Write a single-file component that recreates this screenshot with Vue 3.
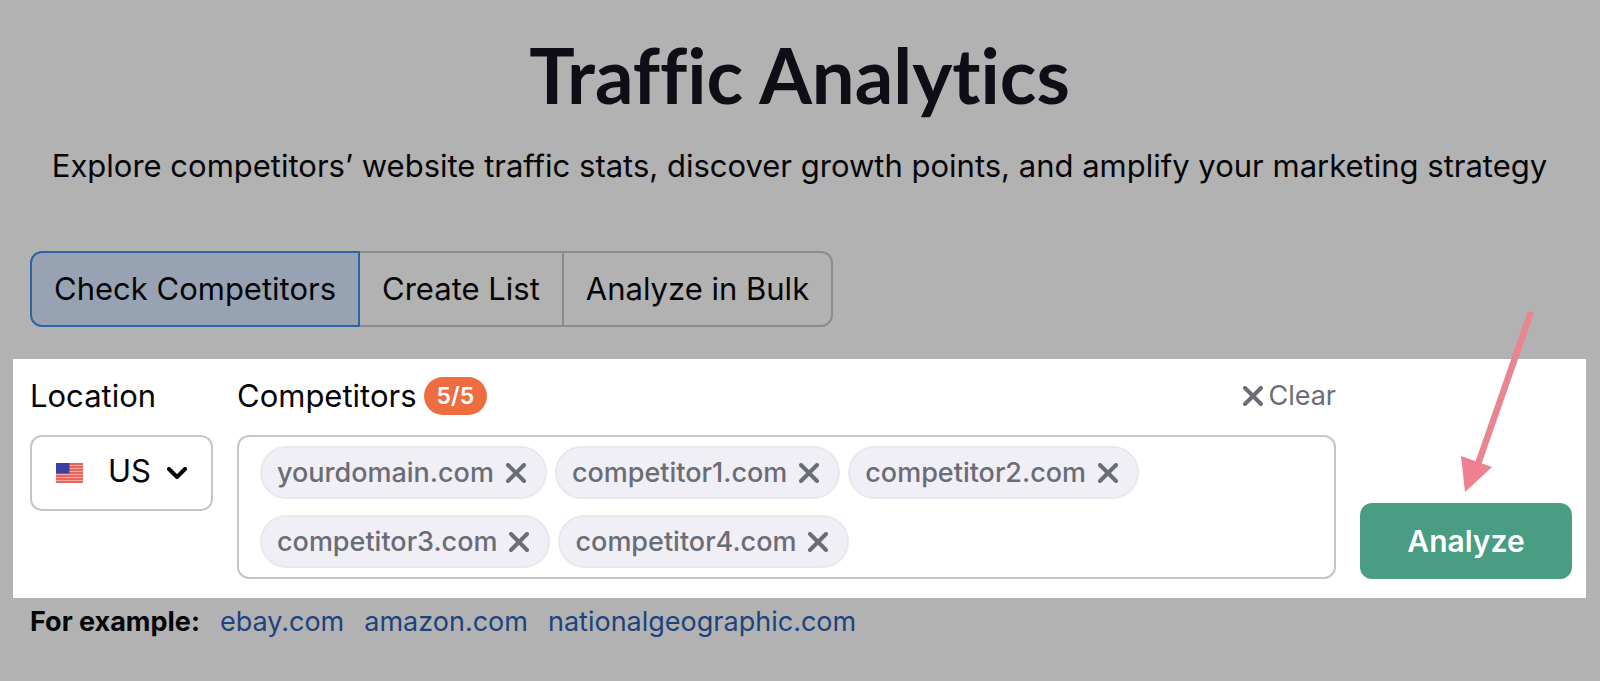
<script setup>
import { ref } from 'vue'

const tabs = ['Check Competitors', 'Create List', 'Analyze in Bulk']
const activeTab = ref(tabs[0])
const location = ref('US')
const limit = 5
const count = ref(5)
const competitors = ref([
  'yourdomain.com',
  'competitor1.com',
  'competitor2.com',
  'competitor3.com',
  'competitor4.com',
])
const examples = ['ebay.com', 'amazon.com', 'nationalgeographic.com']

function remove(name) {
  competitors.value = competitors.value.filter((c) => c !== name)
  count.value = competitors.value.length
}

function clearAll() {
  competitors.value = []
  count.value = 0
}
</script>

<template>
  <main class="page">
    <header class="intro">
      <h1 class="title">Traffic Analytics</h1>
      <p class="subtitle">Explore competitors’ website traffic stats, discover growth points, and amplify your marketing strategy</p>
    </header>

    <nav class="tabs">
      <button
        v-for="tab in tabs"
        :key="tab"
        type="button"
        class="tab"
        :class="{ active: tab === activeTab }"
        @click="activeTab = tab"
      >{{ tab }}</button>
    </nav>

    <form class="panel" @submit.prevent>
      <div class="field">
        <div class="label-row">
          <label for="location">Location</label>
        </div>
        <div class="select-wrap">
          <svg class="flag" viewBox="0 0 27 20" aria-hidden="true">
            <rect width="27" height="20" fill="#f9a9a0" />
            <path d="M0 1h27M0 4h27M0 7h27M0 10h27M0 13h27M0 16h27M0 19h27" stroke="#e04f47" stroke-width="1.7" />
            <rect width="13.5" height="10.5" fill="#3c3f9f" />
          </svg>
          <select id="location" v-model="location" class="select">
            <option>US</option>
          </select>
          <svg class="chevron" viewBox="0 0 20 12" aria-hidden="true">
            <path d="M2 2l8 8 8-8" />
          </svg>
        </div>
      </div>

      <div class="field" role="group" aria-labelledby="competitors-label">
        <div class="label-row">
          <span id="competitors-label">Competitors</span>
          <span class="badge">{{ count }}/{{ limit }}</span>
          <button type="button" class="clear" @click="clearAll">
            <svg class="cross" viewBox="0 0 20 20" aria-hidden="true"><path d="M2 2l16 16M18 2L2 18" /></svg>
            <span>Clear</span>
          </button>
        </div>
        <ul class="chips">
          <li v-for="name in competitors" :key="name" class="chip">
            <span>{{ name }}</span>
            <button type="button" class="chip-remove" :aria-label="'Remove ' + name" @click="remove(name)">
              <svg class="cross" viewBox="0 0 20 20" aria-hidden="true"><path d="M2 2l16 16M18 2L2 18" /></svg>
            </button>
          </li>
        </ul>
      </div>

      <div class="action">
        <button type="submit" class="analyze">Analyze</button>
        <svg class="arrow" viewBox="0 0 76 182" aria-hidden="true">
          <path d="M70 1L16 156" stroke="#e98491" stroke-width="6.500" />
          <path d="M0 145L31 156L4 181Z" fill="#ee8090" />
        </svg>
      </div>
    </form>

    <p class="examples">
      <strong>For example:</strong>
      <a v-for="site in examples" :key="site" href="#">{{ site }}</a>
    </p>
  </main>
</template>

<style>
body {
  background: #b2b2b2;
}
</style>

<style scoped>
.page {
  font-family: Inter, "Liberation Sans", sans-serif;
  font-size: 31px;
  line-height: 36px;
  color: #050508;
  padding: 32px 14px 0 13px;
}

button,
select {
  font: inherit;
  color: inherit;
  margin: 0;
  padding: 0;
  border: 0;
  background: none;
  cursor: pointer;
}

svg {
  display: block;
  fill: none;
  flex: none;
}

.intro {
  text-align: center;
}

.title {
  margin: 0;
  font-family: Lato, Inter, sans-serif;
  font-size: 76px;
  line-height: 86px;
  font-weight: 700;
  font-variant-ligatures: none;
  color: #0d0e16;
}

.subtitle {
  margin: 30px 0 0;
}

.tabs {
  display: flex;
  padding-left: 17px;
  margin-top: 67px;
}

.tab {
  height: 76px;
  padding: 0 22px;
  border: 2px solid #8a8b90;
  margin-left: -2px;
}

.tab:first-child {
  margin-left: 0;
  border-radius: 12px 0 0 12px;
}

.tab:last-child {
  border-radius: 0 12px 12px 0;
}

.tab.active {
  position: relative;
  background: #97a3b3;
  border-color: #2f64a3;
}

.panel {
  display: grid;
  grid-template-columns: 183px 1fr 212px;
  gap: 24px;
  margin-top: 32px;
  padding: 18px 14px 19px 17px;
  background: #fff;
}

.label-row {
  display: flex;
  align-items: center;
  height: 38px;
  margin-bottom: 20px;
}

.badge {
  margin-left: 7px;
  padding: 0 13px;
  border-radius: 19px;
  background: #ed6c40;
  color: #fff;
  font-size: 23px;
  line-height: 38px;
  font-weight: 600;
}

.clear {
  display: flex;
  align-items: center;
  gap: 5px;
  margin-left: auto;
  color: #6a6c76;
  font-size: 27px;
}

.cross {
  width: 20px;
  height: 20px;
  stroke: #6a6c76;
  stroke-width: 4;
  stroke-linecap: round;
}

.select-wrap {
  display: grid;
  align-items: center;
}

.select-wrap > * {
  grid-area: 1 / 1;
}

.select {
  appearance: none;
  width: 100%;
  height: 76px;
  padding: 0 0 4px 76px;
  border: 2px solid #c6c6ca;
  border-radius: 12px;
}

.flag {
  width: 27px;
  height: 20px;
  margin-left: 26px;
}

.chevron {
  width: 20px;
  height: 12px;
  margin-left: 137px;
  stroke: #050508;
  stroke-width: 4;
  stroke-linecap: round;
  stroke-linejoin: round;
  pointer-events: none;
}

.chips {
  display: flex;
  flex-wrap: wrap;
  gap: 16px 8px;
  margin: 0;
  padding: 9px 21px;
  border: 2px solid #c6c6ca;
  border-radius: 12px;
  list-style: none;
}

.chip {
  display: flex;
  align-items: center;
  gap: 12px;
  height: 53px;
  box-sizing: border-box;
  padding: 0 19px 0 15px;
  border: 2px solid #e9e8ee;
  border-radius: 27px;
  background: #f0eff5;
  color: #6a6c76;
  font-size: 27px;
  font-weight: 500;
}

.action {
  position: relative;
  display: flex;
  align-items: flex-end;
}

.analyze {
  width: 100%;
  height: 76px;
  border-radius: 12px;
  background: #489d82;
  color: #fff;
  font-size: 30px;
  font-weight: 600;
}

.arrow {
  position: absolute;
  left: 101px;
  bottom: 86px;
  width: 76px;
  height: 182px;
  pointer-events: none;
}

.examples {
  display: flex;
  gap: 20px;
  margin: 6px 0 0;
  padding-left: 17px;
  font-size: 27px;
}

.examples strong {
  font-weight: 700;
}

.examples a {
  color: #1d437e;
  text-decoration: none;
}
</style>
